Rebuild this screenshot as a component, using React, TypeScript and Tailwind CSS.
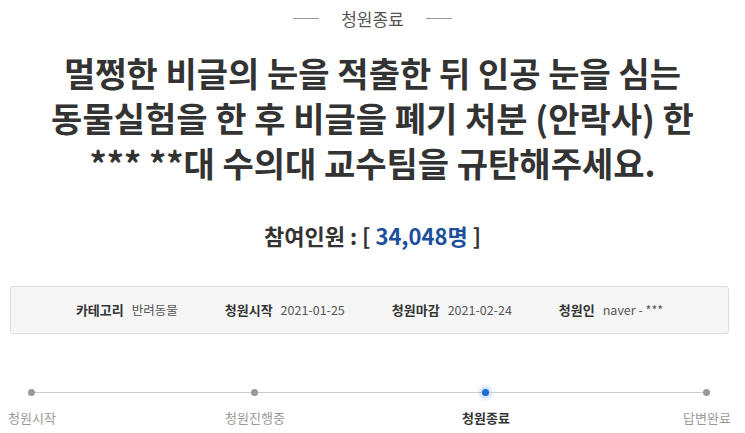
const info = [
  { label: '카테고리', value: '반려동물' },
  { label: '청원시작', value: '2021-01-25' },
  { label: '청원마감', value: '2021-02-24' },
  { label: '청원인', value: 'naver - ***' },
];

const titleLines = [
  '멀쩡한 비글의 눈을 적출한 뒤 인공 눈을 심는',
  '동물실험을 한 후 비글을 폐기 처분 (안락사) 한',
  '*** **대 수의대 교수팀을 규탄해주세요.',
];

const App = () => {
  return (
    <div className="w-[745px] h-[433px] overflow-hidden bg-white font-['Noto_Sans_CJK_KR','Noto_Sans',sans-serif] text-[#333]">
      {/* Status header */}
      <div className="h-9 flex items-center justify-center gap-[22px]">
        <span className="w-[26px] h-px bg-[#999]" />
        <span className="text-[17px] text-[#555] leading-none">청원종료</span>
        <span className="w-[26px] h-px bg-[#999]" />
      </div>

      {/* Title */}
      <h1 className="mt-[14px] text-center text-[34px] leading-[45px] font-bold text-[#333]">
        {titleLines.map((line) => (
          <span key={line} className="block whitespace-nowrap">
            {line}
          </span>
        ))}
      </h1>

      {/* Participants */}
      <p className="mt-[35px] text-center text-[22px] leading-[30px] font-bold text-[#333]">
        참여인원 : [ <span className="text-[#1e4f9c]">34,048명</span> ]
      </p>

      {/* Info box */}
      <div className="mt-9 ml-[10px] w-[719px] h-12 flex items-center justify-center gap-[47px] bg-[#f6f6f6] border border-[#dedede] rounded-[3px]">
        {info.map((item) => (
          <div key={item.label} className="flex items-center gap-2">
            <span className="text-[13px] font-bold text-[#333]">{item.label}</span>
            <span className="text-[12.5px] text-[#555]">{item.value}</span>
          </div>
        ))}
      </div>

      {/* Progress */}
      <div className="mt-[54px] w-[739px] h-2 flex items-center pl-[28px]">
        <span className="w-[7px] h-[7px] rounded-full bg-[#999]" />
        <span className="w-[216px] h-px bg-[#ccc]" />
        <span className="w-[7px] h-[7px] rounded-full bg-[#999]" />
        <span className="w-[224px] h-px bg-[#ccc]" />
        <span className="w-[7px] h-[7px] rounded-full bg-[#1a6fd0] shadow-[0_0_5px_2px_rgba(80,150,230,0.45)]" />
        <span className="w-[214px] h-px bg-[#ccc]" />
        <span className="w-[7px] h-[7px] rounded-full bg-[#999]" />
      </div>
      <div className="mt-[13px] w-[739px] flex text-[13px] leading-[18px] text-[#999]">
        <span className="w-16 text-center">청원시작</span>
        <span className="ml-[159px] w-16 text-center whitespace-nowrap">청원진행중</span>
        <span className="ml-[167px] w-16 text-center font-bold text-[#333]">청원종료</span>
        <span className="ml-[157px] w-16 text-center">답변완료</span>
      </div>
    </div>
  );
};

export default App;
